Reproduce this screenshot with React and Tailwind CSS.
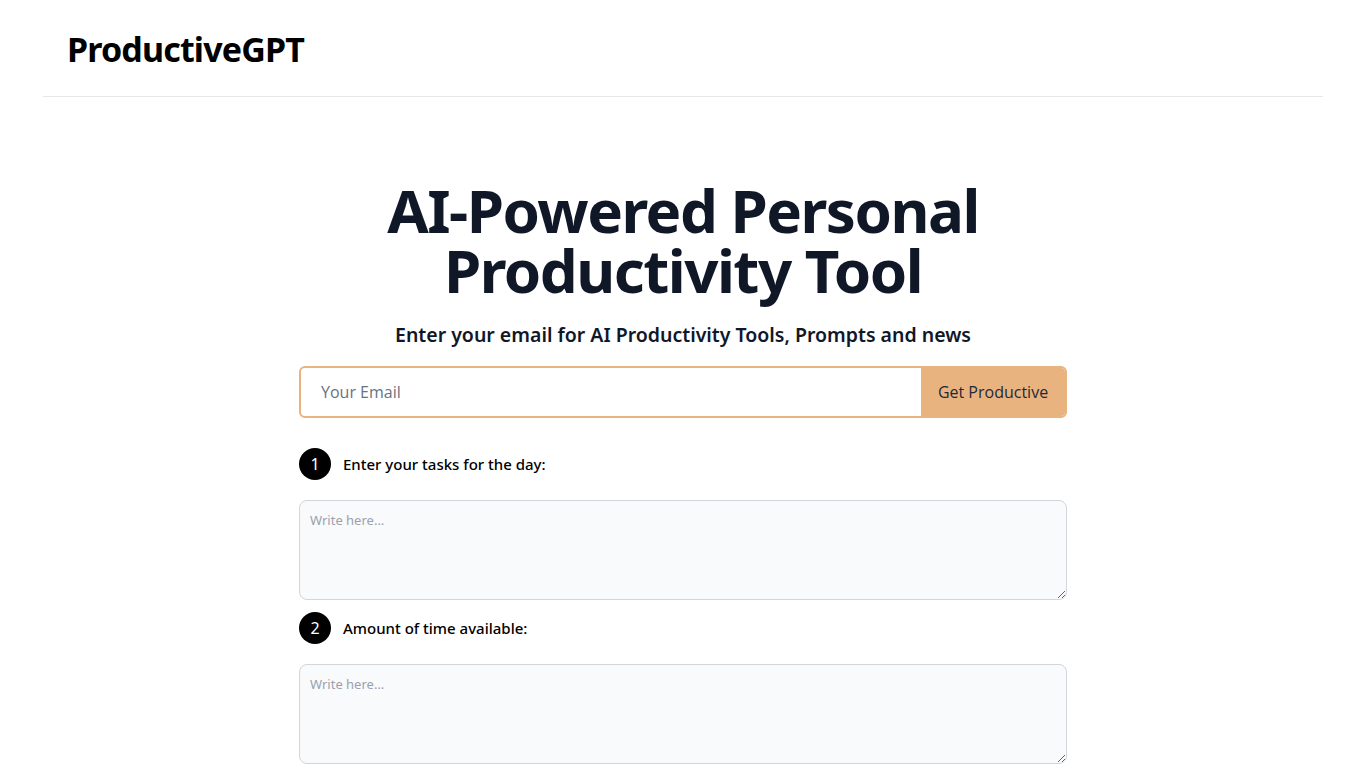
import React from 'react';

const sans = { fontFamily: '"Noto Sans", "Open Sans", sans-serif' };

function Step({ n, label, top }) {
  return (
    <div className={top}>
      <div className="flex items-center gap-3">
        <div className="w-8 h-8 rounded-full bg-black text-white flex items-center justify-center text-base">
          {n}
        </div>
        <label className="text-[15px] font-medium text-black">{label}</label>
      </div>
      <textarea
        placeholder="Write here..."
        className="mt-5 block w-full h-[100px] rounded-lg border border-gray-300 bg-gray-50 px-[10px] py-[10px] text-[13px] text-gray-900 placeholder:text-gray-400 outline-none"
      />
    </div>
  );
}

export default function App() {
  return (
    <div className="min-h-screen bg-white" style={sans}>
      {/* Header */}
      <header className="max-w-7xl mx-auto px-6 h-[97px] flex items-center border-b border-gray-200">
        <h1 className="text-[34px] font-bold tracking-tight text-black mt-[2px]">ProductiveGPT</h1>
      </header>

      <main className="max-w-3xl mx-auto">
        <h2 className="mt-[83px] text-center text-[60px] leading-[60px] font-bold tracking-tight text-gray-900">
          AI-Powered Personal
          <br />
          Productivity Tool
        </h2>
        <p className="mt-[20px] text-center text-[19.5px] font-semibold text-gray-900">
          Enter your email for AI Productivity Tools, Prompts and news
        </p>

        {/* Email form */}
        <form className="mt-[17px] flex h-[52px] rounded-md border-2 border-[#e9b37f] overflow-hidden" style={{ fontFamily: '"Open Sans", sans-serif' }}>
          <input
            type="email"
            placeholder="Your Email"
            className="flex-1 px-5 text-base text-gray-700 placeholder:text-gray-500 outline-none"
          />
          <button type="button" className="w-[144px] bg-[#e9b37f] text-base text-gray-800">
            Get Productive
          </button>
        </form>

        <Step n="1" label="Enter your tasks for the day:" top="mt-[30px]" />
        <Step n="2" label="Amount of time available:" top="mt-[12px]" />
      </main>
    </div>
  );
}
